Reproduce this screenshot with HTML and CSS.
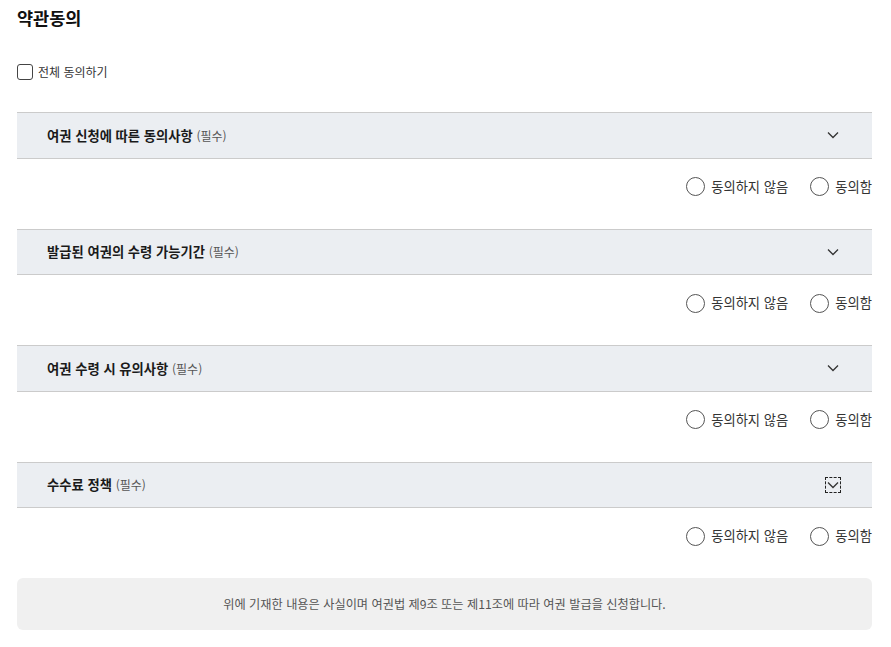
FILE: index.html
```html
<!DOCTYPE html>
<html lang="ko">
<head>
<meta charset="utf-8">
<title>약관동의</title>
<link rel="stylesheet" href="styles.css">
</head>
<body>
<div class="page">
  <h2 class="title">약관동의</h2>
  <label class="all-agree"><span class="checkbox"></span><span>전체 동의하기</span></label>

  <div class="terms">
    <div class="term">
      <div class="term-head"><span class="term-title">여권 신청에 따른 동의사항 <em>(필수)</em></span><span class="chev"><svg width="12" height="8" viewBox="0 0 12 8"><path d="M1 1.5 L6 6.5 L11 1.5" fill="none" stroke="#333" stroke-width="1.3"/></svg></span></div>
      <div class="term-body"><label class="radio"><span class="circle"></span>동의하지 않음</label><label class="radio"><span class="circle"></span>동의함</label></div>
    </div>
    <div class="term">
      <div class="term-head"><span class="term-title">발급된 여권의 수령 가능기간 <em>(필수)</em></span><span class="chev"><svg width="12" height="8" viewBox="0 0 12 8"><path d="M1 1.5 L6 6.5 L11 1.5" fill="none" stroke="#333" stroke-width="1.3"/></svg></span></div>
      <div class="term-body"><label class="radio"><span class="circle"></span>동의하지 않음</label><label class="radio"><span class="circle"></span>동의함</label></div>
    </div>
    <div class="term">
      <div class="term-head"><span class="term-title">여권 수령 시 유의사항 <em>(필수)</em></span><span class="chev"><svg width="12" height="8" viewBox="0 0 12 8"><path d="M1 1.5 L6 6.5 L11 1.5" fill="none" stroke="#333" stroke-width="1.3"/></svg></span></div>
      <div class="term-body"><label class="radio"><span class="circle"></span>동의하지 않음</label><label class="radio"><span class="circle"></span>동의함</label></div>
    </div>
    <div class="term">
      <div class="term-head"><span class="term-title">수수료 정책 <em>(필수)</em></span><span class="chev focus"><svg width="12" height="8" viewBox="0 0 12 8"><path d="M1 1.5 L6 6.5 L11 1.5" fill="none" stroke="#333" stroke-width="1.3"/></svg></span></div>
      <div class="term-body"><label class="radio"><span class="circle"></span>동의하지 않음</label><label class="radio"><span class="circle"></span>동의함</label></div>
    </div>
  </div>

  <div class="notice">위에 기재한 내용은 사실이며 여권법 제9조 또는 제11조에 따라 여권 발급을 신청합니다.</div>
</div>
</body>
</html>
```
FILE: styles.css
```css
* { box-sizing: border-box; }
body {
  margin: 0;
  background: #fff;
  font-family: "Noto Sans CJK KR", "Noto Sans", sans-serif;
  color: #222;
}
.page {
  width: 855px;
  margin-left: 17px;
  padding-top: 6px;
}
.title {
  margin: 0;
  font-size: 17.5px;
  font-weight: 700;
  line-height: 24px;
  color: #111;
}
.all-agree {
  display: flex;
  align-items: center;
  gap: 5px;
  margin-top: 34px;
  font-size: 12px;
  line-height: 16px;
  color: #333;
}
.checkbox {
  width: 16px;
  height: 16px;
  border: 1.5px solid #444;
  border-radius: 3px;
  background: #fff;
}
.terms {
  margin-top: 32px;
}
.term-head {
  display: flex;
  align-items: center;
  justify-content: space-between;
  height: 46.5px;
  padding: 0 31px 0 30px;
  background: #ebeef2;
  border-top: 1px solid #cbcbcb;
  border-bottom: 1px solid #cbcbcb;
}
.term-title {
  font-size: 13.3px;
  font-weight: 700;
  color: #1a1a1a;
}
.term-title em {
  font-style: normal;
  font-weight: 400;
  font-size: 12px;
  color: #555;
}
.chev {
  width: 16px;
  height: 16px;
  display: flex;
  align-items: center;
  justify-content: center;
}
.chev.focus {
  border: 1px dashed #222;
}
.term-body {
  display: flex;
  justify-content: flex-end;
  gap: 22px;
  padding: 19px 0 33px;
  height: 70px;
}
.radio {
  display: flex;
  align-items: center;
  gap: 6px;
  font-size: 13.3px;
  line-height: 18px;
  color: #333;
}
.circle {
  width: 19px;
  height: 19px;
  border: 1px solid #555;
  border-radius: 50%;
  background: #fff;
}
.notice {
  height: 52px;
  display: flex;
  align-items: center;
  justify-content: center;
  background: #f0f0f0;
  border-radius: 6px;
  font-size: 12.2px;
  color: #555;
}
```
